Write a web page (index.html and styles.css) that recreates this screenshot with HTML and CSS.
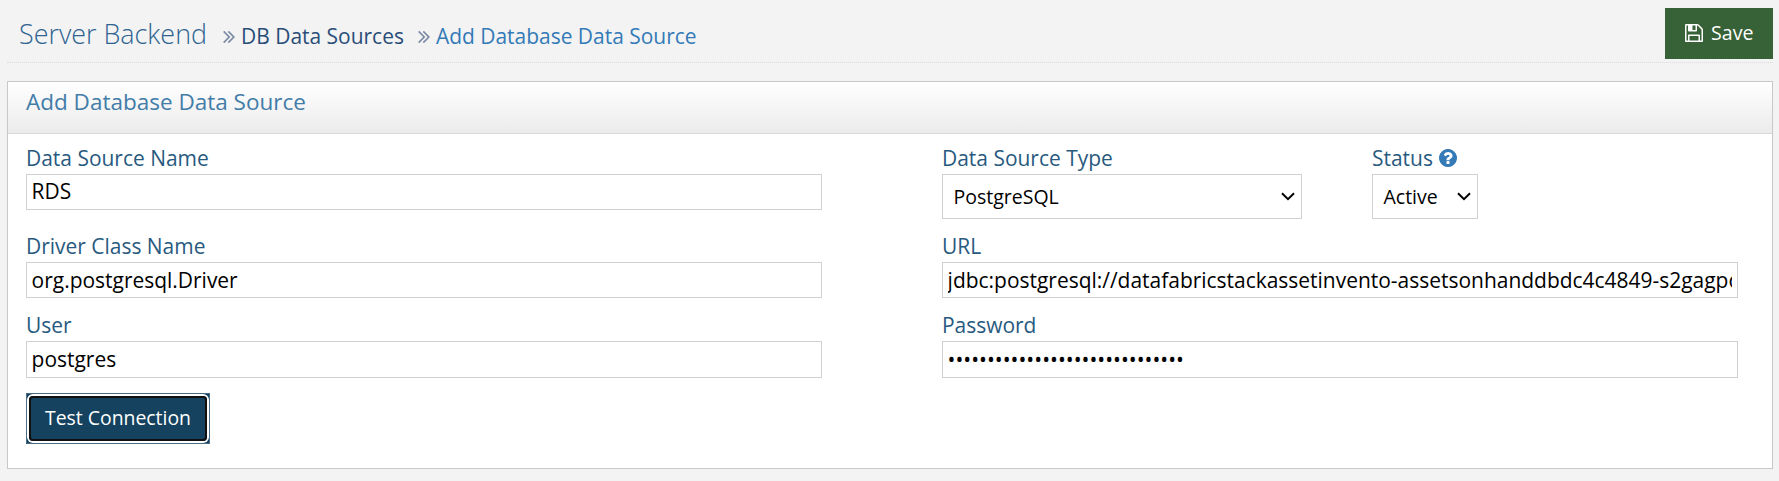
FILE: index.html
```html
<!DOCTYPE html>
<html lang="en">
<head>
<meta charset="utf-8">
<title>Add Database Data Source</title>
<link rel="stylesheet" href="styles.css">
</head>
<body>
<svg class="defs" aria-hidden="true">
  <symbol id="angles" viewBox="3 461 976 998"><path d="M595 960q0 13-10 23l-466 466q-10 10-23 10t-23-10l-50-50q-10-10-10-23t10-23l393-393-393-393q-10-10-10-23t10-23l50-50q10-10 23-10t23 10l466 466q10 10 10 23zm384 0q0 13-10 23l-466 466q-10 10-23 10t-23-10l-50-50q-10-10-10-23t10-23l393-393-393-393q-10-10-10-23t10-23l50-50q10-10 23-10t23 10l466 466q10 10 10 23z"/></symbol>
</svg>
<header class="topbar">
  <h1 class="title">Server Backend</h1>
  <nav class="crumbs">
    <span class="crumb"><svg class="sep"><use href="#angles"/></svg><a class="crumb-link">DB Data Sources</a></span>
    <span class="crumb current"><svg class="sep"><use href="#angles"/></svg><a class="crumb-link">Add Database Data Source</a></span>
  </nav>
  <button class="save" type="button">
    <svg class="save-icon" viewBox="128 128 1536 1536"><path d="M512 1536h768v-384h-768v384zm896 0h128v-896q0-14-10-38.5t-20-34.5l-281-281q-10-10-34-20t-39-10v416q0 40-28 68t-68 28h-576q-40 0-68-28t-28-68v-416h-128v1280h128v-416q0-40 28-68t68-28h832q40 0 68 28t28 68v416zm-384-928v-320q0-13-9.5-22.5t-22.5-9.5h-192q-13 0-22.5 9.5t-9.5 22.5v320q0 13 9.5 22.5t22.5 9.5h192q13 0 22.5-9.5t9.5-22.5zm640 32v928q0 40-28 68t-68 28h-1344q-40 0-68-28t-28-68v-1344q0-40 28-68t68-28h928q40 0 88 20t76 48l280 280q28 28 48 76t20 88z"/></svg>
    <span>Save</span>
  </button>
</header>
<main class="panel">
  <h2 class="panel-title">Add Database Data Source</h2>
  <form class="form">
    <div class="field">
      <label class="label">Data Source Name</label>
      <input class="input first" type="text" value="RDS">
    </div>
    <div class="pair">
      <div class="field type">
        <label class="label">Data Source Type</label>
        <div class="select"><span>PostgreSQL</span><svg class="chevron" viewBox="0 0 14 9"><path d="M1 1.2l6 6 6-6"/></svg></div>
      </div>
      <div class="field status">
        <label class="label">Status <svg class="help" viewBox="128 128 1536 1536"><path d="M1024 1376v-192q0-14-9-23t-23-9h-192q-14 0-23 9t-9 23v192q0 14 9 23t23 9h192q14 0 23-9t9-23zm256-672q0-88-55.5-163t-138.5-116-170-41q-243 0-371 213-15 24 8 42l132 100q7 6 19 6 16 0 25-12 53-68 86-92 34-24 86-24 48 0 85.5 26t37.5 59q0 38-20 61t-68 45q-63 28-115.5 86.5t-52.5 125.5v36q0 14 9 23t23 9h192q14 0 23-9t9-23q0-19 21.5-49.5t54.5-49.5q32-18 49-28.5t46-35 44.5-48 28-60.5 12.5-81zm384 192q0 209-103 385.5t-279.5 279.5-385.5 103-385.5-103-279.5-279.5-103-385.5 103-385.5 279.5-279.5 385.5-103 385.5 103 279.5 279.5 103 385.5z"/></svg></label>
        <div class="select"><span>Active</span><svg class="chevron" viewBox="0 0 14 9"><path d="M1 1.2l6 6 6-6"/></svg></div>
      </div>
    </div>
    <div class="field">
      <label class="label">Driver Class Name</label>
      <input class="input" type="text" value="org.postgresql.Driver">
    </div>
    <div class="field">
      <label class="label">URL</label>
      <input class="input" type="text" value="jdbc:postgresql://datafabricstackassetinvento-assetsonhanddbdc4c4849-s2gagpo">
    </div>
    <div class="field">
      <label class="label">User</label>
      <input class="input tall" type="text" value="postgres">
    </div>
    <div class="field">
      <label class="label">Password</label>
      <input class="input tall" type="password" value="012345678901234567890123456789">
    </div>
    <button class="test" type="button"><span class="test-ring">Test Connection</span></button>
  </form>
</main>
</body>
</html>
```

FILE: styles.css
```css
* {
  box-sizing: border-box;
}

body {
  margin: 0;
  height: 481px;
  padding: 0 6px 0 7px;
  overflow: hidden;
  background: #f3f3f3;
  color: #285a80;
  font: 400 20.96px/28px "Open Sans", "Noto Sans", sans-serif;
}

.defs {
  position: absolute;
  width: 0;
  height: 0;
}

.topbar {
  display: flex;
  height: 63px;
  padding-left: 12px;
  border-bottom: 1px dotted #dcdcdc;
}

.title {
  width: 204px;
  margin: 0;
  color: #2f6391;
  font-size: 26.9px;
  font-weight: 300;
  line-height: 68px;
  white-space: nowrap;
}

.crumbs {
  display: flex;
  gap: 14px;
  flex: 1;
  color: #294d78;
  line-height: 72px;
  white-space: nowrap;
}

.crumb {
  display: flex;
}

.sep {
  width: 12px;
  height: 12px;
  margin: 31px 6px 0 0;
  fill: #7c8ba4;
}

.current {
  color: #337ab7;
}

.save {
  display: flex;
  align-items: center;
  gap: 8px;
  width: 108px;
  height: 51px;
  margin-top: 8px;
  padding: 0 0 2px 20px;
  border: 0;
  background: #376137;
  color: #fff;
  font: 400 19.6px/28px "Open Sans", sans-serif;
}

.save-icon {
  width: 18px;
  height: 18px;
  fill: #fff;
}

.panel {
  height: 388px;
  margin-top: 18px;
  border: 1px solid #c8c8c8;
  background: #fff;
}

.panel-title {
  height: 52px;
  margin: 0;
  padding-left: 18px;
  border-bottom: 1px solid #d8d8d8;
  background: linear-gradient(#fff, #ebebeb);
  color: #427ca8;
  font-size: 22.5px;
  font-weight: 400;
  line-height: 39px;
}

.form {
  display: grid;
  grid-template-columns: 796px 796px;
  grid-template-rows: 88px 79px 92px 51px;
  column-gap: 120px;
  padding-left: 18px;
}

.field {
  display: flex;
  flex-direction: column;
}

.label {
  display: flex;
  align-items: center;
  gap: 6px;
  height: 40px;
  padding-top: 8px;
}

.input {
  width: 100%;
  height: 36px;
  padding: 0 5px 0 4.6px;
  border: 1px solid #d0d0d0;
  background: #fff;
  color: #000;
  font: inherit;
}

.first {
  padding-bottom: 2px;
}

.tall {
  height: 37px;
  padding-bottom: 2px;
}

.pair {
  display: flex;
  gap: 70px;
}

.type {
  width: 360px;
}

.status {
  width: 106px;
}

.help {
  width: 18px;
  height: 18px;
  fill: #337ab7;
}

.select {
  display: flex;
  align-items: center;
  justify-content: space-between;
  height: 45px;
  padding: 0 6px 0 10.5px;
  border: 1px solid #d0d0d0;
  color: #000;
  font-size: 19.5px;
}

.chevron {
  width: 14px;
  height: 9px;
  fill: none;
  stroke: #000;
  stroke-width: 2;
}

.test {
  width: 184px;
  height: 51px;
  padding: 2px;
  border: 1px solid #4a6c85;
  background: #15425f;
  color: #fff;
  font: 400 19.4px/28px "Open Sans", sans-serif;
}

.test-ring {
  display: flex;
  align-items: center;
  justify-content: center;
  height: 100%;
  padding-bottom: 2px;
  border: 2px solid #101010;
  border-radius: 4px;
  box-shadow: 0 0 0 2px #fff;
}
```
